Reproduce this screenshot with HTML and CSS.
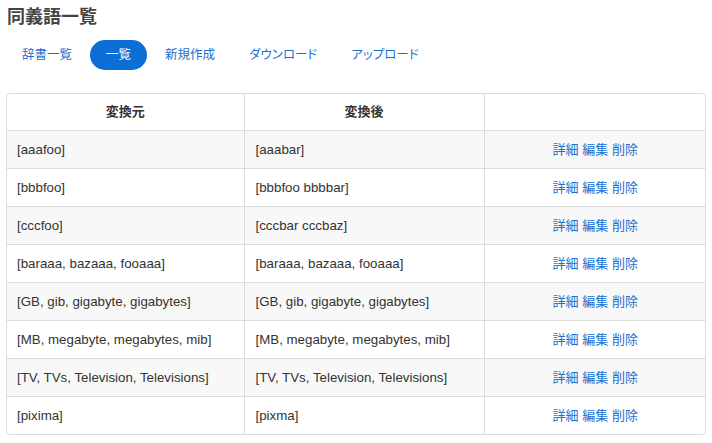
FILE: index.html
```html
<!DOCTYPE html>
<html lang="ja">
<head>
<meta charset="utf-8">
<title>同義語一覧</title>
<link rel="stylesheet" href="styles.css">
</head>
<body>
<div class="page">
  <h1 class="title">同義語一覧</h1>
  <nav class="pills">
    <a class="pill" href="#">辞書一覧</a>
    <a class="pill active" href="#">一覧</a>
    <a class="pill" href="#">新規作成</a>
    <a class="pill" href="#">ダウンロード</a>
    <a class="pill" href="#">アップロード</a>
  </nav>
  <div class="card">
    <table class="grid">
      <colgroup>
        <col class="c1"><col class="c2"><col class="c3">
      </colgroup>
      <thead>
        <tr><th>変換元</th><th>変換後</th><th></th></tr>
      </thead>
      <tbody>
        <tr><td>[aaafoo]</td><td>[aaabar]</td><td class="acts"><a href="#">詳細</a> <a href="#">編集</a> <a href="#">削除</a></td></tr>
        <tr><td>[bbbfoo]</td><td>[bbbfoo bbbbar]</td><td class="acts"><a href="#">詳細</a> <a href="#">編集</a> <a href="#">削除</a></td></tr>
        <tr><td>[cccfoo]</td><td>[cccbar cccbaz]</td><td class="acts"><a href="#">詳細</a> <a href="#">編集</a> <a href="#">削除</a></td></tr>
        <tr><td>[baraaa, bazaaa, fooaaa]</td><td>[baraaa, bazaaa, fooaaa]</td><td class="acts"><a href="#">詳細</a> <a href="#">編集</a> <a href="#">削除</a></td></tr>
        <tr><td>[GB, gib, gigabyte, gigabytes]</td><td>[GB, gib, gigabyte, gigabytes]</td><td class="acts"><a href="#">詳細</a> <a href="#">編集</a> <a href="#">削除</a></td></tr>
        <tr><td>[MB, megabyte, megabytes, mib]</td><td>[MB, megabyte, megabytes, mib]</td><td class="acts"><a href="#">詳細</a> <a href="#">編集</a> <a href="#">削除</a></td></tr>
        <tr><td>[TV, TVs, Television, Televisions]</td><td>[TV, TVs, Television, Televisions]</td><td class="acts"><a href="#">詳細</a> <a href="#">編集</a> <a href="#">削除</a></td></tr>
        <tr><td>[pixima]</td><td>[pixma]</td><td class="acts"><a href="#">詳細</a> <a href="#">編集</a> <a href="#">削除</a></td></tr>
      </tbody>
    </table>
  </div>
</div>
</body>
</html>
```

FILE: styles.css
```css
* { box-sizing: border-box; }
html, body { margin: 0; padding: 0; background: #fff; }
body {
  font-family: "Liberation Sans", Arial, "Noto Sans CJK JP", sans-serif;
  font-size: 13px;
  color: #333;
}
.page { padding: 6px 7px 0 6px; }
.title {
  margin: 0 0 0 1px;
  font-size: 18px;
  line-height: 22px;
  font-weight: bold;
  color: #444;
}
.pills {
  display: flex;
  margin: 12px 0 0 0;
  height: 30px;
  align-items: center;
}
.pill {
  display: block;
  padding: 0 16px;
  margin-right: 2px;
  height: 30px;
  line-height: 30px;
  border-radius: 15px;
  color: #1a6fd0;
  text-decoration: none;
  font-size: 12.5px;
  font-feature-settings: "palt";
}
.pill.active {
  background: #0b6fd6;
  color: #fff;
}
.card {
  margin-top: 23px;
  border: 1px solid #dcdcdc;
  border-radius: 4px;
  overflow: hidden;
  width: 700px;
}
.grid {
  width: 100%;
  border-collapse: collapse;
  table-layout: fixed;
}
.c1 { width: 237px; }
.c2 { width: 240px; }
.grid th, .grid td {
  border: 1px solid #dcdcdc;
  padding: 8px 10px;
  line-height: 21px;
  text-align: left;
  white-space: nowrap;
}
.grid td { font-size: 13.3px; }
.grid td.acts { font-size: 13px; }
.grid tr > :first-child { border-left: 0; }
.grid tr > :last-child { border-right: 0; }
.grid thead th { border-top: 0; text-align: center; font-weight: bold; color: #333; padding-top: 7px; }
.grid tbody tr:last-child td { border-bottom: 0; }
.grid tbody tr:nth-child(odd) { background: #f8f8f8; }
.grid td + td { padding-left: 11px; }
.grid td.acts { text-align: center; }
.acts a { color: #1a6fd0; text-decoration: none; }
```
